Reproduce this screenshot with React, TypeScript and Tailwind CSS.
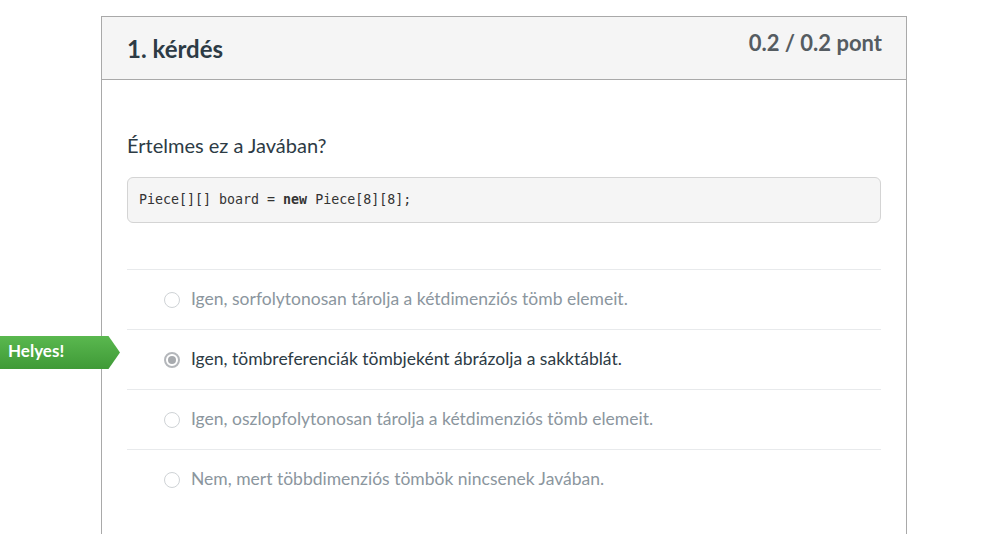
import React from "react";

const answers = [
  { text: "Igen, sorfolytonosan tárolja a kétdimenziós tömb elemeit.", selected: false },
  { text: "Igen, tömbreferenciák tömbjeként ábrázolja a sakktáblát.", selected: true },
  { text: "Igen, oszlopfolytonosan tárolja a kétdimenziós tömb elemeit.", selected: false },
  { text: "Nem, mert többdimenziós tömbök nincsenek Javában.", selected: false },
];

function Radio({ selected }: { selected: boolean }) {
  if (selected) {
    return (
      <span className="w-4 h-4 rounded-full border-2 border-[#b4b7bb] bg-white flex items-center justify-center shrink-0">
        <span className="w-2 h-2 rounded-full bg-[#a7aaae]" />
      </span>
    );
  }
  return <span className="w-4 h-4 rounded-full border border-[#cfd3d6] bg-white shrink-0" />;
}

function CorrectBadge() {
  return (
    <div className="absolute left-0 top-[336px] flex h-[33px] z-10">
      <div className="w-[108px] h-full bg-gradient-to-b from-[#5ab84f] to-[#3f9a37] flex items-center pl-2 pb-[3px]">
        <span className="text-white font-bold text-[17px]">Helyes!</span>
      </div>
      <svg width="12" height="33" viewBox="0 0 12 33" className="block">
        <defs>
          <linearGradient id="g" x1="0" y1="0" x2="0" y2="1">
            <stop offset="0" stopColor="#5ab84f" />
            <stop offset="1" stopColor="#3f9a37" />
          </linearGradient>
        </defs>
        <polygon points="0,0 0.5,0 12,16.5 0.5,33 0,33" fill="url(#g)" />
      </svg>
    </div>
  );
}

export default function App() {
  return (
    <div className="relative w-[1005px] h-[534px] overflow-hidden bg-white pt-4 pl-[101px]" style={{ fontFamily: "Lato, 'Open Sans', sans-serif" }}>
      <CorrectBadge />
      <div className="w-[806px] h-[540px] border border-[#a9a9a9] border-b-0">
        <div className="h-[63px] bg-[#f5f5f5] border-b border-[#a9a9a9] flex justify-between items-start pl-[25px] pr-[24px]">
          <h2 className="text-[24px] font-bold text-[#2d3b45] pt-[17px] leading-[30px]">1. kérdés</h2>
          <span className="text-[22px] font-bold text-[#555c61] pt-[12px] leading-[28px]">0.2 / 0.2 pont</span>
        </div>
        <div className="px-[25px] pt-[51px]">
          <p className="text-[20px] text-[#2d3b45] leading-[28px]">Értelmes ez a Javában?</p>
          <div className="mt-[18px] h-[46px] rounded-md border border-[#d4d4d4] bg-[#f5f5f5] flex items-center px-[11px]">
            <code className="text-[13.3px] text-[#333]" style={{ fontFamily: "'DejaVu Sans Mono', monospace" }}>
              Piece[][] board = <b>new</b> Piece[8][8];
            </code>
          </div>
          <ul className="mt-[46px]">
            {answers.map((a) => (
              <li key={a.text} className="h-[60px] border-t border-[#e8eaec] flex items-center gap-[11px] pl-[37px]">
                <Radio selected={a.selected} />
                <span className={a.selected ? "text-[17.5px] text-[#2d3b45]" : "text-[17.5px] text-[#8b969e]"}>{a.text}</span>
              </li>
            ))}
          </ul>
        </div>
      </div>
    </div>
  );
}
